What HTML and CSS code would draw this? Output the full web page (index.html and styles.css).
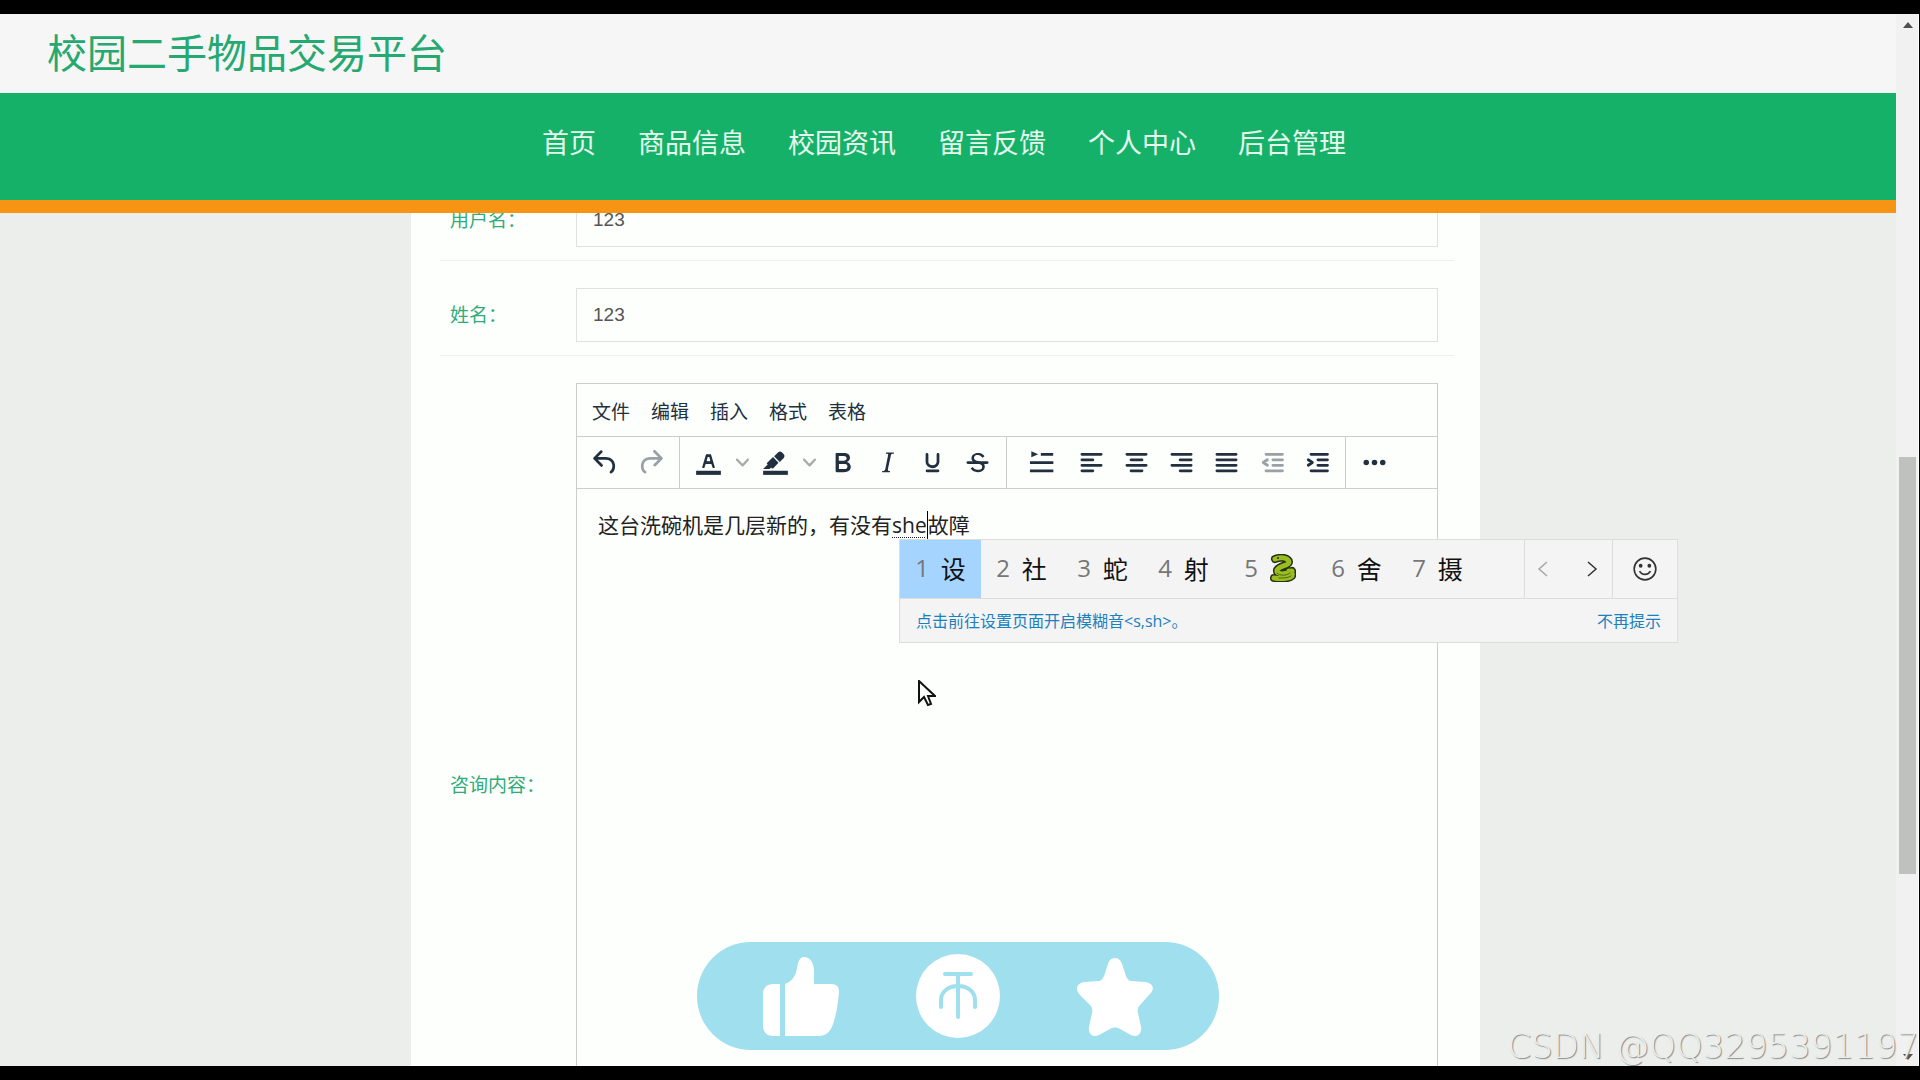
FILE: index.html
```html
<!DOCTYPE html>
<html lang="zh-CN">
<head>
<meta charset="utf-8">
<title>校园二手物品交易平台</title>
<link rel="stylesheet" href="styles.css">
</head>
<body>
<div class="screen">
  <div class="page">
    <header class="site-header">
      <h1 class="site-title">校园二手物品交易平台</h1>
      <nav class="site-nav">
        <a href="#">首页</a>
        <a href="#">商品信息</a>
        <a href="#">校园资讯</a>
        <a href="#">留言反馈</a>
        <a href="#">个人中心</a>
        <a href="#">后台管理</a>
      </nav>
    </header>
    <main class="content">
      <form class="card">
        <div class="field">
          <label for="username">用户名：</label>
          <input id="username" type="text" value="123">
        </div>
        <div class="field">
          <label for="realname">姓名：</label>
          <input id="realname" type="text" value="123">
        </div>
        <div class="field">
          <label id="body-label">咨询内容：</label>
          <div class="editor">
            <div class="menubar">
              <button type="button">文件</button>
              <button type="button">编辑</button>
              <button type="button">插入</button>
              <button type="button">格式</button>
              <button type="button">表格</button>
            </div>
            <div class="toolbar">
              <div class="group">
                <button type="button" class="tool" aria-label="撤销"><svg viewBox="0 0 24 24"><path d="M6.4 8H12c3.7 0 6.2 2 6.8 5.1.6 2.7-.4 5.6-2.3 6.8a1 1 0 01-1-1.8c1.1-.6 1.8-2.7 1.4-4.6-.5-2.1-2.1-3.5-4.9-3.5H6.4l3.3 3.3a1 1 0 11-1.4 1.4l-5-5a1 1 0 010-1.4l5-5a1 1 0 011.4 1.4L6.4 8z"/></svg></button>
                <button type="button" class="tool" aria-label="重做" disabled><svg viewBox="0 0 24 24"><path d="M17.6 10H12c-2.8 0-4.4 1.4-4.9 3.5-.4 2 .3 4 1.4 4.6a1 1 0 11-1 1.8c-2-1.2-2.9-4.1-2.3-6.8.6-3 3-5.1 6.8-5.1h5.6l-3.3-3.3a1 1 0 111.4-1.4l5 5a1 1 0 010 1.4l-5 5a1 1 0 01-1.4-1.4l3.3-3.3z"/></svg></button>
              </div>
              <div class="group">
                <button type="button" class="tool" aria-label="文字颜色"><svg viewBox="0 0 24 24"><path d="M3 18h18v3H3z"/><path d="M8.7 16h-.8a.5.5 0 01-.5-.6l2.7-9c.1-.3.3-.4.5-.4h2.8c.2 0 .4.1.5.4l2.7 9a.5.5 0 01-.5.6h-.8a.5.5 0 01-.4-.4l-.7-2.2c0-.3-.3-.4-.5-.4h-3.4c-.2 0-.4.1-.5.4l-.7 2.2c0 .3-.2.4-.4.4zm2.6-7.6l-.6 2a.5.5 0 00.5.6h1.6a.5.5 0 00.5-.6l-.6-2c0-.3-.3-.4-.5-.4h-.4c-.2 0-.4.1-.5.4z"/></svg></button>
                <button type="button" class="chevron" aria-label="更多文字颜色"><svg viewBox="0 0 10 10"><path d="M8.7 2.2c.3-.3.8-.3 1 0 .4.4.4.9 0 1.2L5.7 7.8c-.3.3-.9.3-1.2 0L.2 3.4a.8.8 0 010-1.2c.3-.3.8-.3 1.1 0L5 6l3.7-3.8z"/></svg></button>
                <button type="button" class="tool" aria-label="背景颜色"><svg viewBox="0 0 24 24"><path d="M3 18h18v3H3z"/><path d="M7.7 16.7H3l3.3-3.3-.7-.8L10.2 8l4 4.1-4 4.2c-.2.2-.6.2-.8 0l-.6-.7-1.1 1.1zm5-7.5L11 7.4l3-2.9a2 2 0 012.6 0L18 6c.7.7.7 2 0 2.7l-2.9 2.9-1.8-1.8-.5-.6"/></svg></button>
                <button type="button" class="chevron" aria-label="更多背景颜色"><svg viewBox="0 0 10 10"><path d="M8.7 2.2c.3-.3.8-.3 1 0 .4.4.4.9 0 1.2L5.7 7.8c-.3.3-.9.3-1.2 0L.2 3.4a.8.8 0 010-1.2c.3-.3.8-.3 1.1 0L5 6l3.7-3.8z"/></svg></button>
                <button type="button" class="tool" aria-label="粗体"><svg viewBox="0 0 24 24"><path d="M7.8 19c-.3 0-.5 0-.6-.2l-.2-.5V5.7c0-.2 0-.4.2-.5l.6-.2h5c1.5 0 2.7.3 3.5 1 .7.6 1.1 1.4 1.1 2.5a3 3 0 01-.6 1.9c-.4.6-1 1-1.6 1.2.4.1.9.3 1.3.6s.8.7 1 1.2c.4.4.5 1 .5 1.6 0 1.3-.4 2.3-1.3 3-.8.7-2.1 1-3.8 1H7.8zm5-8.3c.6 0 1.2-.1 1.6-.5.4-.3.6-.7.6-1.3 0-1.1-.8-1.7-2.3-1.7H9.3v3.5h3.4zm.5 6c.7 0 1.3-.1 1.7-.4.4-.4.6-.9.6-1.5s-.2-1-.7-1.4c-.4-.3-1-.4-2-.4H9.4v3.8h4z"/></svg></button>
                <button type="button" class="tool" aria-label="斜体"><svg viewBox="0 0 24 24"><path d="M16.7 4.7l-.1.9h-.3c-.6 0-1 0-1.4.3-.3.3-.4.6-.5 1.1l-2.1 9.8v.6c0 .5.4.8 1.4.8h.2l-.2.8H8l.2-.8h.2c1.1 0 1.8-.5 2-1.5l2-9.8.1-.5c0-.6-.4-.8-1.4-.8h-.3l.2-.9h5.8z"/></svg></button>
                <button type="button" class="tool" aria-label="下划线"><svg viewBox="0 0 24 24"><path d="M16 5c.6 0 1 .4 1 1v5.5a4 4 0 01-.4 1.8l-1 1.4a5.3 5.3 0 01-5.5 1 5 5 0 01-1.6-1c-.5-.4-.8-.9-1.1-1.4a4 4 0 01-.4-1.8V6c0-.6.4-1 1-1s1 .4 1 1v5.5c0 .3 0 .6.2 1l.6.7a3.3 3.3 0 002.2.8 3.4 3.4 0 002.2-.8c.3-.2.4-.5.6-.8l.2-.9V6c0-.6.4-1 1-1zM8 17h8c.6 0 1 .4 1 1s-.4 1-1 1H8a1 1 0 010-2z"/></svg></button>
                <button type="button" class="tool" aria-label="删除线"><svg viewBox="0 0 24 24"><path d="M15.6 8.5c-.5-.7-1-1.1-1.3-1.3-.6-.4-1.3-.6-2-.6-2.7 0-2.8 1.7-2.8 2.1 0 1.6 1.8 2 3.2 2.3 4.4.9 4.6 2.8 4.6 3.9 0 1.4-.7 4.1-5 4.1A6.2 6.2 0 017 16.4l1.5-1.1c.4.6 1.6 2 3.7 2 1.6 0 2.5-.4 3-1.2.4-.8.3-2-.8-2.6-.7-.4-1.6-.7-2.9-1-1-.2-3.9-.8-3.9-3.6C7.6 6 10.3 5 12.4 5c2.9 0 4.2 1.6 4.7 2.4l-1.5 1.1z"/><path d="M5 11h14a1 1 0 010 2H5a1 1 0 010-2z"/></svg></button>
              </div>
              <div class="group">
                <button type="button" class="tool wide" aria-label="首行缩进"><svg viewBox="0 0 24 24"><path d="M4.600 3.800l5 2.200-5 2.200zM11.500 5h9v2h-9zM3.600 11h17v2h-17zM3.600 17h17v2h-17z"/></svg></button>
                <button type="button" class="tool" aria-label="左对齐"><svg viewBox="0 0 24 24" class="lines"><path d="M5 6h14M5 10h8M5 14h14M5 18h8"/></svg></button>
                <button type="button" class="tool" aria-label="居中对齐"><svg viewBox="0 0 24 24" class="lines"><path d="M5 6h14M8 10h8M5 14h14M8 18h8"/></svg></button>
                <button type="button" class="tool" aria-label="右对齐"><svg viewBox="0 0 24 24" class="lines"><path d="M5 6h14M11 10h8M5 14h14M11 18h8"/></svg></button>
                <button type="button" class="tool" aria-label="两端对齐"><svg viewBox="0 0 24 24" class="lines"><path d="M5 6h14M5 10h14M5 14h14M5 18h14"/></svg></button>
                <button type="button" class="tool" aria-label="减少缩进" disabled><svg viewBox="0 0 24 24" class="lines"><path d="M8 6h12M13 10h7M13 14h7M8 18h12M9 10l-3 2 3 2"/></svg></button>
                <button type="button" class="tool" aria-label="增加缩进"><svg viewBox="0 0 24 24" class="lines"><path d="M8 6h12M13 10h7M13 14h7M8 18h12M6 10l3 2-3 2"/></svg></button>
              </div>
              <div class="group">
                <button type="button" class="tool" aria-label="更多"><svg viewBox="0 0 24 24"><circle cx="6" cy="12" r="2"/><circle cx="12" cy="12" r="2"/><circle cx="18" cy="12" r="2"/></svg></button>
              </div>
            </div>
            <div class="editor-body" contenteditable="true" role="textbox" aria-labelledby="body-label" spellcheck="false">这台洗碗机是几层新的，有没有<span class="composing">she</span>故障</div>
          </div>
        </div>
      </form>
    </main>

    <div class="actions">
      <button type="button" aria-label="点赞"><svg viewBox="0 0 84 84"><path d="M14 30h7v52h-7C8 82 4 78 4 72V40c0-6 4-10 10-10zM26 30c8-3 11-9 12-16C39 7 41 3 45 3c6 0 10 6 10 14v13h17c6 0 8 3 8 8-1 10-2 20-5 29-3 11-8 15-16 15H26z"/></svg></button>
      <button type="button" aria-label="投币"><svg viewBox="0 0 84 84"><circle cx="42" cy="42" r="42"/><path class="coin-mark" d="M29 20h26M42 20v43M25 53V46c0-8 7-14 17-14s17 6 17 14v7"/></svg></button>
      <button type="button" aria-label="收藏"><svg viewBox="0 0 84 84"><path d="M42 4c4 0 6 3 7 6l4 12c1 3 3 5 6 5l13 1c9 1 10 8 4 13L67 51c-2 2-3 5-2 8l3 14c1 7-4 11-10 8L47 75c-3-2-7-2-10 0L26 81c-6 3-11-1-10-8l3-14c1-3 0-6-2-8L7 41C2 36 3 29 12 28l13-1c3 0 5-2 6-5l4-12c1-3 3-6 7-6z"/></svg></button>
    </div>

    <div class="ime">
      <ol class="candidates">
        <li class="active"><span>1</span>设</li>
        <li><span>2</span>社</li>
        <li><span>3</span>蛇</li>
        <li><span>4</span>射</li>
        <li class="picture"><span>5</span><svg class="snake" viewBox="0 0 26 28"><g fill="none" stroke-linecap="round" stroke-linejoin="round"><path stroke="#26330f" stroke-width="8" d="M5 5c5-2 13-2 14 3 0 4-9 3-12 8-1 5 8 5 15 1M4 24c6 1 15 1 18-2 1-3-1-5-3-5"/><path stroke="#9cbd22" stroke-width="5" d="M5 5c5-2 13-2 14 3 0 4-9 3-12 8-1 5 8 5 15 1M4 24c6 1 15 1 18-2 1-3-1-5-3-5"/><path stroke="#4c6517" stroke-width="1" d="M7 19c3 3 9 3 13 0M9 24c5 0 9 0 12-2"/></g><circle cx="8" cy="4" r="1" fill="#26330f"/></svg></li>
        <li><span>6</span>舍</li>
        <li><span>7</span>摄</li>
      </ol>
      <div class="pager">
        <button type="button" aria-label="上一页" disabled><svg viewBox="0 0 18 18"><path d="M13 2L5 9l8 7"/></svg></button>
        <button type="button" aria-label="下一页"><svg viewBox="0 0 18 18"><path d="M5 2l8 7-8 7"/></svg></button>
      </div>
      <button type="button" class="emoji" aria-label="表情"><svg viewBox="0 0 24 24"><circle cx="12" cy="12" r="10"/><path d="M7 14c2 4 8 4 10 0"/><circle class="eye" cx="8" cy="9" r="1"/><circle class="eye" cx="16" cy="9" r="1"/></svg></button>
      <div class="tip">
        <a href="#">点击前往设置页面开启模糊音&lt;s,sh&gt;。</a>
        <a href="#">不再提示</a>
      </div>
    </div>

    <svg class="pointer" viewBox="0 0 18 27"><path d="M1 1v21l5-5 4 8 3-1-3-8h7z"/></svg>
  </div>

  <div class="scrollbar">
    <svg viewBox="0 0 10 6"><path d="M0 6l5-6 5 6z"/></svg>
    <div class="track"><div class="thumb"></div></div>
    <svg viewBox="0 0 10 6"><path d="M0 0l5 6 5-6z"/></svg>
  </div>
  <div class="watermark">CSDN @QQ3295391197</div>
</div>
</body>
</html>
```
FILE: styles.css
```css
* {
  box-sizing: border-box;
}

body {
  margin: 0;
  height: 100vh;
  padding: 14px 1px 14px 0;
  background: #000;
  color: #222f3e;
  font-family: "Liberation Sans", "Noto Sans CJK SC", sans-serif;
  font-size: 19px;
}

button {
  display: flex;
  align-items: center;
  justify-content: center;
  padding: 0;
  border: 0;
  background: none;
  color: inherit;
  font: inherit;
}

a {
  text-decoration: none;
}

.screen {
  position: relative;
  display: flex;
  height: 100%;
  overflow: hidden;
}

.page {
  position: relative;
  flex: 1;
  overflow: hidden;
  background: #eceeec;
}

/* Header */
.site-header {
  position: relative;
  z-index: 1;
  background: #f5f6f5;
}

.site-title {
  margin: 0;
  padding: 2px 0 0 47px;
  color: #26a871;
  font-size: 40px;
  font-weight: 400;
  line-height: 77px;
}

.site-nav {
  display: flex;
  justify-content: center;
  gap: 42px;
  padding: 2px 8px 6px 0;
  border-bottom: 13px solid #f79413;
  background: #15b168;
  font-size: 27px;
  line-height: 99px;
}

.site-nav a {
  color: #e6f9ee;
}

/* Form card */
.content {
  margin-top: -47px;
  padding-right: 5px;
}

.card {
  max-width: 1069px;
  margin: 0 auto;
  padding: 0 26px 0 29px;
  background: #fdfffd;
}

.field {
  display: grid;
  grid-template-columns: 126px 1fr;
  align-items: center;
  padding: 27px 16px 13px 10px;
  border-bottom: 1px solid #f0f1f0;
}

.field label {
  padding-bottom: 3px;
  color: #2fac79;
}

.field input {
  width: 100%;
  height: 54px;
  padding: 0 16px;
  border: 1px solid #dfe1df;
  background: transparent;
  color: #555;
  font: inherit;
}

/* Rich text editor */
.editor {
  min-height: 804px;
  border: 1px solid #ccc;
}

.menubar {
  display: flex;
  gap: 21px;
  height: 52px;
  padding-left: 15px;
}

.toolbar {
  display: flex;
  height: 53px;
  border-top: 1px solid #ccc;
  border-bottom: 1px solid #ccc;
}

.group {
  display: flex;
  align-items: center;
  padding: 0 6px;
}

.group + .group {
  border-left: 1px solid #ccc;
}

.group button {
  height: 100%;
}

.tool {
  width: 45px;
}

.tool.wide {
  width: 56px;
}

.tool svg {
  width: 33px;
  height: 33px;
  fill: #222f3e;
}

.tool .lines {
  fill: none;
  stroke: #222f3e;
  stroke-width: 2;
  stroke-linecap: round;
  stroke-linejoin: round;
}

.tool:disabled svg {
  opacity: 0.45;
}

.chevron {
  width: 22px;
}

.chevron svg {
  width: 13px;
  height: 13px;
  fill: #a4a9a9;
}

.editor-body {
  padding: 21px;
  color: #222;
  font-size: 21px;
  line-height: 32px;
  outline: none;
}

.composing {
  display: inline-block;
  border-right: 1px solid #000;
  font-family: "Open Sans", sans-serif;
  line-height: 28px;
  text-decoration: underline dotted 1px;
  text-underline-offset: 4px;
}

/* Input method window */
.ime {
  position: absolute;
  top: 525px;
  left: 899px;
  display: grid;
  grid-template: 58px 44px / 1fr 88px 65px;
  width: 779px;
  border: 1px solid #dcdedc;
  background: #f3f4f3;
}

.candidates {
  display: flex;
  margin: 0;
  padding: 0;
  list-style: none;
  color: #111;
  font-size: 25px;
}

.candidates li {
  display: flex;
  align-items: center;
  justify-content: center;
  gap: 12px;
  width: 81px;
  padding-bottom: 3px;
}

.candidates .picture {
  width: 92px;
}

.candidates span {
  color: #777;
  font-family: "Open Sans", sans-serif;
  font-size: 24px;
}

.candidates .active {
  background: #a5d5ff;
}

.snake {
  width: 26px;
  height: 28px;
}

.pager,
.emoji {
  border-left: 1px solid #dcdedc;
}

.pager {
  display: flex;
  align-items: center;
  justify-content: space-between;
  padding: 0 11px 0 9px;
}

.pager svg {
  width: 18px;
  height: 18px;
}

.pager svg,
.emoji svg {
  fill: none;
  stroke: #333;
  stroke-width: 1.5;
}

.pager button:disabled {
  opacity: 0.4;
}

.emoji svg {
  width: 26px;
  height: 26px;
}

.emoji .eye {
  fill: #333;
}

.tip {
  grid-column: 1 / -1;
  display: flex;
  align-items: center;
  justify-content: space-between;
  padding: 0 16px 2px;
  border-top: 1px solid #dcdedc;
  font-family: "Open Sans", "Noto Sans CJK SC", sans-serif;
  font-size: 16px;
}

.tip a {
  color: #1c80bd;
}

.pointer {
  position: absolute;
  top: 666px;
  left: 918px;
  width: 18px;
  height: 27px;
  fill: #fff;
  stroke: #111;
  stroke-width: 2;
}

/* Floating like / coin / favourite pill */
.actions {
  position: absolute;
  bottom: 16px;
  left: 697px;
  display: flex;
  align-items: center;
  justify-content: space-between;
  width: 522px;
  height: 108px;
  padding: 0 62px;
  border-radius: 54px;
  background: #a0dfed;
}

.actions svg {
  width: 84px;
  height: 84px;
  fill: #fff;
}

.actions .coin-mark {
  fill: none;
  stroke: #a0dfed;
  stroke-width: 4;
  stroke-linecap: round;
}

/* Scrollbar */
.scrollbar {
  display: flex;
  flex-direction: column;
  align-items: center;
  width: 23px;
  padding: 8px 2px 6px 3px;
  border-right: 1px solid #fff;
  background: #f0f1f0;
}

.scrollbar svg {
  width: 10px;
  height: 6px;
  fill: #505050;
}

.track {
  flex: 1;
  display: grid;
  grid-template-rows: 428fr 416fr 180fr;
  width: 100%;
}

.thumb {
  grid-row: 2;
  background: #bfc1bf;
}

.watermark {
  position: absolute;
  right: 0;
  bottom: 0;
  color: #eceeec;
  font-family: "DejaVu Sans", sans-serif;
  font-size: 34px;
  font-weight: 200;
  line-height: 40px;
  text-shadow: 1px 1px 1px #888;
}
```
